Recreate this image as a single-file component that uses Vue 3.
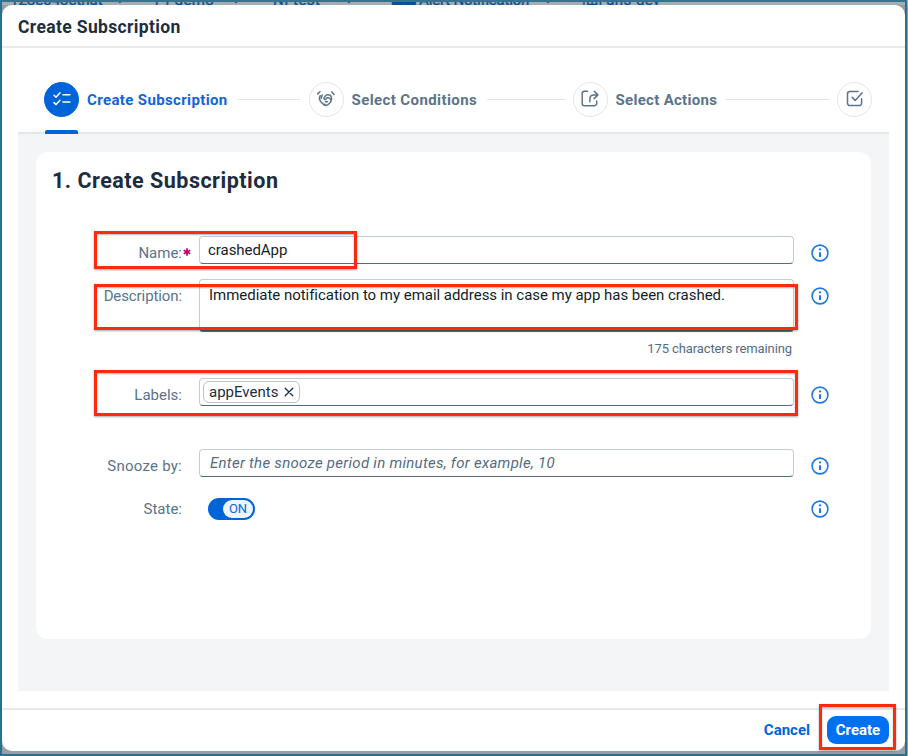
<script setup>
const crumbs = [
  { text: '128e043cthat', cls: 'c1' },
  { text: '⌄', cls: 'c2 chev' },
  { text: '{•} demo', cls: 'c3' },
  { text: '⌄', cls: 'c4 chev' },
  { text: 'NI test', cls: 'c5' },
  { text: '⌄', cls: 'c6 chev' },
  { text: '▆▃ Alert Notification', cls: 'c7' },
  { text: '⌄', cls: 'c8 chev' },
  { text: '|ші ans-dev', cls: 'c9' },
]
const rows = [
  { id: 'name', label: 'Name:', required: true },
  { id: 'description', label: 'Description:' },
  { id: 'labels', label: 'Labels:' },
  { id: 'snooze', label: 'Snooze by:' },
  { id: 'state', label: 'State:' },
]
</script>

<template>
  <div class="frame">
    <div class="backdrop">
      <span v-for="c in crumbs" :key="c.cls" :class="['crumb', c.cls]">{{ c.text }}</span>
    </div>
    <section class="dialog">
      <header class="head"><span class="title">Create Subscription</span></header>
      <nav class="steps">
        <div class="step active">
          <span class="dot">
            <svg width="34" height="34" viewBox="0 0 34 34" fill="none" stroke="#fff" stroke-width="1.500" stroke-linecap="round" stroke-linejoin="round">
              <path d="M9 12.200l2 2 4-4.400M9 19.600l2 2 4-4.400M17.900 11.700h7M17.900 19.100h7" />
            </svg>
          </span>
          <span class="step-text t1">Create Subscription</span>
        </div>
        <i class="line l1"></i>
        <div class="step">
          <span class="dot">
            <svg width="34" height="34" viewBox="0 0 34 34" fill="none" stroke="#5b738b" stroke-width="1.500" stroke-linecap="round" stroke-linejoin="round">
              <path d="M8.700 10.900l2.300-2.100M25.100 11.400l-2.300-2.500M11.300 12.700c-1.600 2.400-.9 4.600.9 6.500l3.300 3M13.200 12l-1 3.400M15.500 21.200l1.800 1.400c2.700-1.300 5.100-3.700 5.300-6.800.1-1.400-.4-2.600-1.200-3.400-2.100-1.100-4.300-.7-5.400.9l-1.100 2.100c.2 1.200 1.500 1.400 2.200.5l1-1.200c1.600-.2 2.900.5 3.500 1.800M16.400 18.800h2.200" />
            </svg>
          </span>
          <span class="step-text t2">Select Conditions</span>
        </div>
        <i class="line l2"></i>
        <div class="step">
          <span class="dot">
            <svg width="34" height="34" viewBox="0 0 34 34" fill="none" stroke="#5b738b" stroke-width="1.500" stroke-linecap="round" stroke-linejoin="round">
              <path d="M14.500 8.200h-3a2.300 2.300 0 0 0-2.300 2.300v9.900a2.300 2.300 0 0 0 2.300 2.300h9.900a2.300 2.300 0 0 0 2.300-2.300v-2.500M16.900 18.700v-3c0-2.500 1.300-3.800 3.800-3.800h4M21.200 8.300l3.700 3.600-3.700 3.700" />
            </svg>
          </span>
          <span class="step-text t3">Select Actions</span>
        </div>
        <i class="line l3"></i>
        <div class="step">
          <span class="dot">
            <svg width="34" height="34" viewBox="0 0 34 34" fill="none" stroke="#5b738b" stroke-width="1.500" stroke-linecap="round" stroke-linejoin="round">
              <path d="M20 8.500h-8.200a2.300 2.300 0 0 0-2.300 2.300v9.500a2.300 2.300 0 0 0 2.300 2.300h9.500a2.300 2.300 0 0 0 2.300-2.300v-4.500M14.200 14.400l3 3 7-7.600" />
            </svg>
          </span>
        </div>
      </nav>
      <main class="content">
        <div class="card">
          <h2><span>1. Create Subscription</span></h2>
          <div v-for="r in rows" :key="r.id" :class="['row', r.id]">
            <label class="label">{{ r.label }}<svg v-if="r.required" class="star" width="8" height="8" viewBox="0 0 8 8" stroke="#ba066c" stroke-width="1.700"><path d="M4 .3v7.400M.7 2.300l6.600 3.400M7.300 2.300L.7 5.700" /></svg></label>
            <div class="control">
              <div v-if="r.id === 'name'" class="input"><span class="v-name">crashedApp</span></div>
              <template v-else-if="r.id === 'description'">
                <div class="input area"><span class="v-desc">Immediate notification to my email address in case my app has been crashed.</span></div>
                <div class="counter"><span>175 characters remaining</span></div>
              </template>
              <div v-else-if="r.id === 'labels'" class="input tokens">
                <span class="token"><span class="v-token">appEvents</span>
                  <svg width="10" height="10" viewBox="0 0 10 10" stroke="#1d2d3e" stroke-width="1.300" stroke-linecap="round"><path d="M1.200 1.200l7.600 7.600M8.800 1.200L1.200 8.800" /></svg>
                </span>
              </div>
              <div v-else-if="r.id === 'snooze'" class="input"><span class="v-hint">Enter the snooze period in minutes, for example, 10</span></div>
              <div v-else class="switch"><span class="knob">ON</span></div>
            </div>
            <svg class="info" width="18" height="18" viewBox="0 0 18 18" fill="none" stroke="#2378df" stroke-width="1.600">
              <circle cx="9" cy="9" r="7.900" />
              <path d="M9 8.200v4.800" stroke-width="2" />
              <circle cx="9" cy="5.400" r="1.100" fill="#2378df" stroke="none" />
            </svg>
          </div>
        </div>
      </main>
      <footer class="foot">
        <span class="cancel">Cancel</span>
        <span class="create"><span>Create</span></span>
      </footer>
    </section>
    <div class="mark m1"></div>
    <div class="mark m2"></div>
    <div class="mark m3"></div>
    <div class="mark m4"></div>
  </div>
</template>

<style>
body { margin: 0; background: #fff; overflow: hidden; }
</style>

<style scoped>
.frame {
  position: relative; box-sizing: border-box; width: 908px; height: 756px;
  padding: 5px 3px 5px 2px; background: #94a0a8; overflow: hidden;
  font-family: Roboto, "Liberation Sans", sans-serif; color: #1d2d3e;
}
.frame::after {
  content: ""; position: absolute; inset: 0 1px 0 0; border: 2px solid #2a6f90;
  border-top-color: #35748f; pointer-events: none; z-index: 3;
}
.backdrop { position: absolute; left: 0; right: 0; top: 0; height: 5px; overflow: hidden; background: #a5adb1; }
.crumb { position: absolute; bottom: -3px; font-size: 15px; line-height: 16px; white-space: nowrap; color: #0b4f97; -webkit-text-stroke: .3px #0b4f97; }
.chev { bottom: -1px; font-size: 9px; line-height: 12px; }
.c1 { left: 10px; } .c2 { left: 116px; } .c3 { left: 154px; letter-spacing: .4px; } .c4 { left: 232px; } .c5 { left: 273px; letter-spacing: .5px; }
.c6 { left: 345px; } .c7 { left: 392px; letter-spacing: -.2px; } .c8 { left: 544px; } .c9 { left: 582px; letter-spacing: .3px; }
.dialog { position: relative; display: flex; flex-direction: column; height: 746px; border-radius: 10px; background: #fff; overflow: hidden; }
.dialog > * { flex: none; }
.head { box-sizing: border-box; display: flex; align-items: center; height: 43px; padding: 2px 0 0 16px; border-bottom: 2px solid #e9eaeb; }
.title { font-size: 17.5px; font-weight: 700; letter-spacing: .36px; }
.steps { box-sizing: border-box; display: flex; align-items: center; height: 84px; padding: 34px 33px 15px 42px; }
.step { display: flex; align-items: center; gap: 8px; }
.dot { box-sizing: border-box; width: 35px; height: 35px; flex: none; border: 1px solid #e3e5e7; border-radius: 50%; display: grid; place-items: center; }
.dot svg { margin: -1px; }
.active .dot { background: #0064d9; border-color: #0064d9; }
.step-text { font-size: 15px; font-weight: 700; white-space: nowrap; color: #5b738b; }
.active .step-text { color: #0f66d6; }
.line { height: 1px; flex: none; background: #e3e5e7; }
.content { position: relative; box-sizing: border-box; height: 559px; margin: 0 16px; padding: 18px 18px 0; background: #f4f5f7; border-top: 2px solid #e4e6e8; }
.content::before { content: ""; position: absolute; left: 27px; top: -4px; width: 33px; height: 4px; border-radius: 2px 2px 0 0; background: #0064d9; }
.card { box-sizing: border-box; height: 487px; border-radius: 12px; background: #fff; }
h2 { box-sizing: border-box; height: 84px; margin: 0; padding: 15px 0 0 16px; font-size: 21.5px; line-height: 28px; font-weight: 700; letter-spacing: .5px; white-space: nowrap; }
.row { display: grid; grid-template-columns: 163px 595px 18px; align-items: start; height: 43px; }
.description { height: 99px; }
.description .label { letter-spacing: -.1px; }
.labels { height: 71px; }
.snooze .label { letter-spacing: .25px; }
.label { position: relative; padding: 7px 17px 0 0; text-align: right; font-size: 15px; line-height: 20px; color: #5b738b; white-space: nowrap; }
.star { position: absolute; left: 147px; top: 12px; }
.input { box-sizing: border-box; height: 28px; padding-left: 8px; border: 1px solid #c3cdd7; border-bottom-color: #556b82; border-radius: 4px; font-size: 15px; line-height: 26px; white-space: nowrap; color: #131e29; }
.area { height: 53px; padding-left: 9px; line-height: 30px; border-bottom: 2px solid #556b82; }
.v-desc { letter-spacing: -.03px; }
.v-name { letter-spacing: -.05px; }
.counter { padding: 8px 2px 0 0; text-align: right; font-size: 13px; line-height: 18px; letter-spacing: -.11px; color: #556b82; }
.tokens { display: flex; align-items: center; padding-left: 3px; }
.token { box-sizing: border-box; display: flex; align-items: center; justify-content: space-between; width: 97px; height: 22px; padding: 0 5px; border: 1px solid #bcc3ca; border-radius: 6px; line-height: 20px; color: #1d2d3e; }
.v-hint { font-style: italic; letter-spacing: .28px; color: #556b82; margin-left: 2px; }
.switch { box-sizing: border-box; display: flex; justify-content: flex-end; width: 47px; height: 22px; margin: 6px 0 0 9px; padding: 2px; border-radius: 11px; background: #0064d9; }
.knob { width: 30px; height: 18px; border-radius: 9px; background: #edf6ff; text-align: center; font-size: 13px; line-height: 18px; color: #0f66d6; }
.info { margin: 8px 0 0 17px; }
.foot { box-sizing: border-box; display: flex; align-items: center; justify-content: flex-end; gap: 17px; height: 44px; margin-top: 17px; padding: 0 16px 2px 0; border-top: 2px solid #e9eaeb; font-size: 15px; font-weight: 700; }
.cancel { color: #0064d9; }
.create { display: grid; place-items: center; width: 62px; height: 28px; border-radius: 9px; background: #0070f2; color: #fff; }
.mark { position: absolute; box-sizing: border-box; border: 3px solid #fb2b0b; box-shadow: 0 1px 2px rgba(0, 0, 0, .35), inset 0 1px 2px rgba(0, 0, 0, .3); z-index: 2; }
.m1 { left: 94px; top: 231px; width: 263px; height: 38px; }
.m2 { left: 94px; top: 284px; width: 704px; height: 46px; }
.m3 { left: 94px; top: 370px; width: 704px; height: 46px; }
.m4 { left: 819px; top: 704px; width: 77px; height: 46px; }
.l1 { width: 62px; margin: 0 8.5px 0 10px; }
.l2 { width: 78px; margin: 0 8px 0 9px; }
.l3 { width: 102.5px; margin: 0 8.5px 0 9.5px; }
.t1 { width: 141px; letter-spacing: .37px; }
.t2 { width: 126px; letter-spacing: .4px; }
.t3 { width: 101px; letter-spacing: .3px; }
</style>
